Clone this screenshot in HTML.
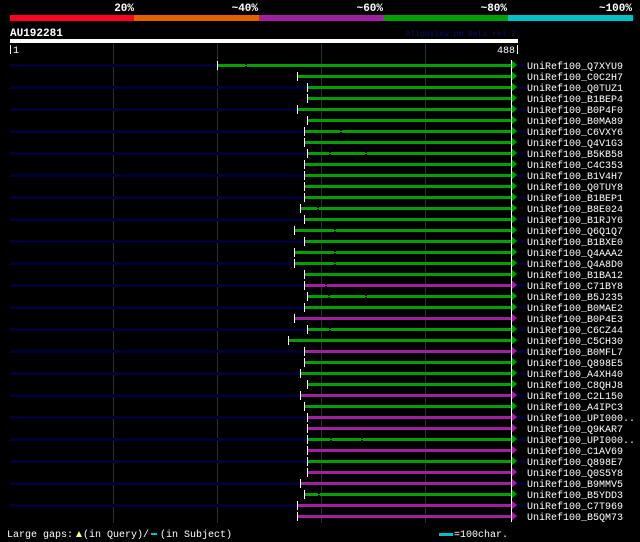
<!DOCTYPE html>
<html><head><meta charset="utf-8"><style>
html,body{margin:0;padding:0;background:#000;width:640px;height:542px;overflow:hidden}
svg{display:block}
text{font-family:"Liberation Mono","DejaVu Sans Mono",monospace;}
</style></head><body>
<svg width="640" height="542" xmlns="http://www.w3.org/2000/svg">
<rect width="640" height="542" fill="#000"/>
<g font-size="11" font-weight="bold" fill="#fff" text-anchor="end">
<text x="134" y="11">20%</text>
<text x="258" y="11">~40%</text>
<text x="383" y="11">~60%</text>
<text x="507" y="11">~80%</text>
<text x="632" y="11">~100%</text>
</g>
<rect x="10" y="15" width="124" height="6" fill="#ff0020"/>
<rect x="134" y="15" width="125" height="6" fill="#e06000"/>
<rect x="259" y="15" width="124" height="6" fill="#a020a0"/>
<rect x="383" y="15" width="125" height="6" fill="#00a000"/>
<rect x="508" y="15" width="125" height="6" fill="#00c0c8"/>
<text x="10" y="36" font-size="11" font-weight="bold" fill="#fff">AU192281</text>
<text x="516" y="36" font-size="8" font-weight="bold" fill="#0a0a4a" text-anchor="end">AlignView.pm Beta rel.7</text>
<rect x="10" y="39" width="508" height="4" fill="#fff"/>
<g stroke="#333310" stroke-width="1">
<line x1="113.5" y1="44" x2="113.5" y2="523"/>
<line x1="217.5" y1="44" x2="217.5" y2="523"/>
<line x1="321.5" y1="44" x2="321.5" y2="523"/>
<line x1="425.5" y1="44" x2="425.5" y2="523"/>
</g>
<rect x="10" y="45" width="1" height="9" fill="#fff"/>
<text x="13" y="53" font-size="10" fill="#fff">1</text>
<text x="515" y="53" font-size="10" fill="#fff" text-anchor="end">488</text>
<rect x="517" y="45" width="1" height="9" fill="#fff"/>
<g id="rows"></g>
<g font-size="10" fill="#fff">
<text x="7" y="537">Large gaps:</text>
<polygon points="76,537 79,531 82,537" fill="#ffff80"/>
<text x="83" y="537">(in Query)/</text>
<rect x="151" y="533" width="6" height="2" fill="#00c0c8"/>
<text x="160" y="537">(in Subject)</text>
<rect x="439" y="533" width="14" height="3" fill="#00c0c8"/>
<text x="454" y="537">=100char.</text>
</g>
</svg>
<script>
var d=[[217,'g',[245],'Q7XYU9'],[297,'g',[],'C0C2H7'],[307,'g',[],'Q0TUZ1'],[307,'g',[],'B1BEP4'],[297,'g',[],'B0P4F0'],[307,'g',[],'B0MA89'],[304,'g',[340],'C6VXY6'],[304,'g',[],'Q4V1G3'],[307,'g',[329,365],'B5KB58'],[304,'g',[],'C4C353'],[304,'g',[],'B1V4H7'],[304,'g',[],'Q0TUY8'],[304,'g',[],'B1BEP1'],[300,'g',[317],'B8E024'],[304,'g',[],'B1RJY6'],[294,'g',[334],'Q6Q1Q7'],[304,'g',[],'B1BXE0'],[294,'g',[334],'Q4AAA2'],[294,'g',[334],'Q4A8D0'],[304,'g',[],'B1BA12'],[304,'m',[325],'C71BY8'],[307,'g',[328,365],'B5J235'],[304,'g',[],'B0MAE2'],[294,'m',[],'B0P4E3'],[307,'g',[329],'C6CZ44'],[288,'g',[],'C5CH30'],[304,'m',[],'B0MFL7'],[304,'g',[],'Q898E5'],[300,'g',[],'A4XH40'],[307,'g',[],'C8QHJ8'],[300,'m',[],'C2L150'],[304,'g',[],'A4IPC3'],[307,'m',[],'UPI000..'],[307,'m',[],'Q9KAR7'],[307,'g',[330,361],'UPI000..'],[307,'m',[],'C1AV69'],[307,'g',[],'Q898E7'],[307,'m',[],'Q0S5Y8'],[300,'m',[],'B9MMV5'],[304,'g',[318],'B5YDD3'],[297,'m',[],'C7T969'],[297,'m',[],'B5QM73']];
var s='',NS='http://www.w3.org/2000/svg';
d.forEach(function(r,i){var y=65+11*i,c=r[1]=='g'?'#00a000':'#a020a0';
if(i%2==0){s+='<rect x="10" y="'+(y-1)+'" width="'+(r[0]-10)+'" height="3" fill="#000033"/>';s+='<rect x="516" y="'+(y-1)+'" width="10" height="3" fill="#000033"/>';}
s+='<rect x="'+r[0]+'" y="'+(y-1)+'" width="'+(511-r[0])+'" height="3" fill="'+c+'"/>';
r[2].forEach(function(g){s+='<rect x="'+g+'" y="'+(y-1)+'" width="2" height="3" fill="#000"/><rect x="'+g+'" y="'+y+'" width="2" height="1" fill="'+c+'"/>';});
s+='<rect x="'+r[0]+'" y="'+(y-4)+'" width="1" height="9" fill="#fff"/>';
s+='<polygon points="511,'+(y-5)+' 517,'+y+' 511,'+(y+5)+'" fill="'+c+'"/><rect x="511" y="'+(y-5)+'" width="1" height="11" fill="#fff"/>';
s+='<text x="527" y="'+(y+4)+'" font-size="10" fill="#fff">UniRef100_'+r[3]+'</text>';});
document.getElementById('rows').innerHTML=s;
</script>
</body></html>
